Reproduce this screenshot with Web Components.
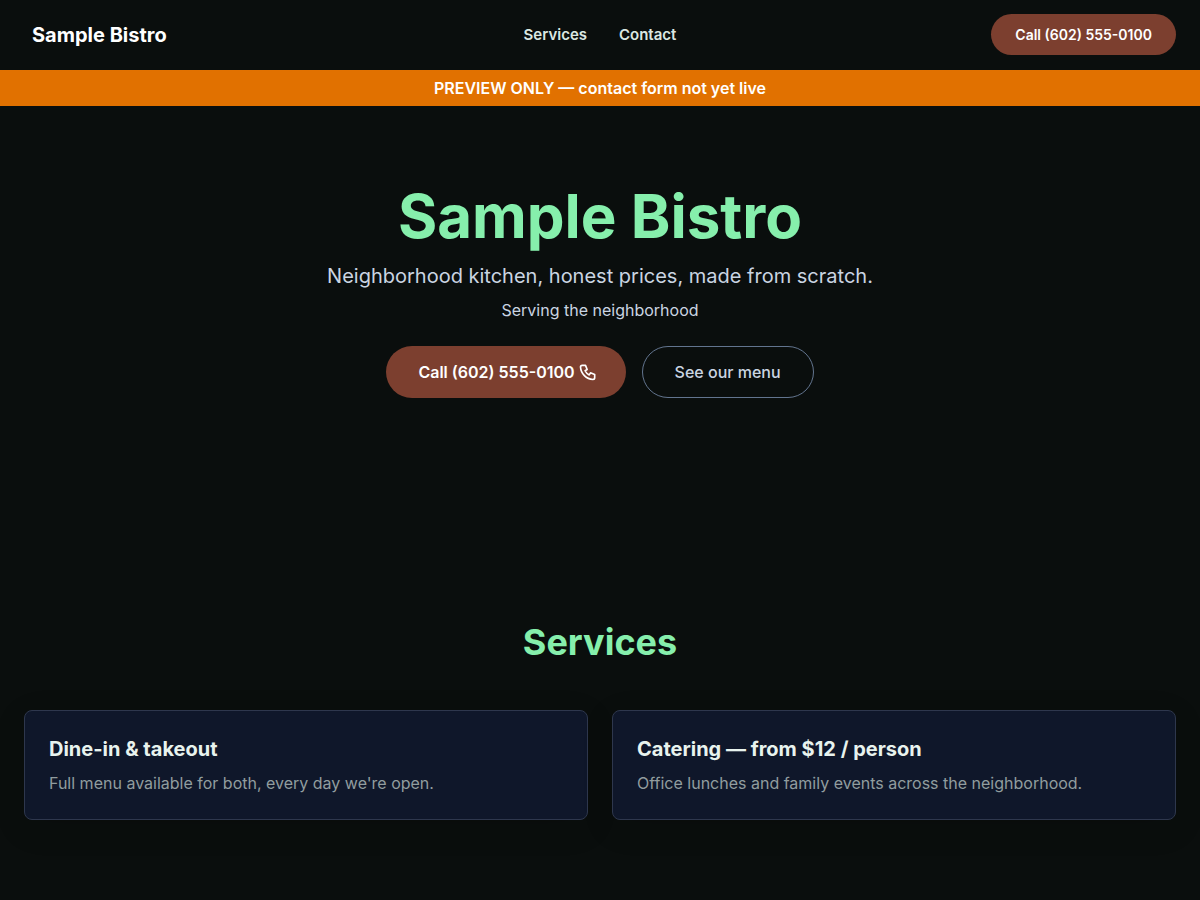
<!DOCTYPE html>
<html lang="en">
<head>
<meta charset="utf-8">
<meta name="viewport" content="width=device-width, initial-scale=1">
<title>Sample Bistro</title>
<style>
  body {
    --brand: #7c3f2f;
    --accent: #86efac;
    --surface: #0f172a;
    margin: 0;
    background: #0a0e0d;
    color: #e8f3ee;
    font: 400 16px/24px Inter, "Liberation Sans", sans-serif;
  }
</style>
</head>
<body>
<bistro-page></bistro-page>

<template id="page">
  <style>
    :host { display: block; }
  </style>
  <site-header></site-header>
  <preview-banner>PREVIEW ONLY — contact form not yet live</preview-banner>
  <main>
    <hero-section></hero-section>
    <services-section>
      <service-card>
        <span slot="title">Dine-in &amp; takeout</span>
        Full menu available for both, every day we're open.
      </service-card>
      <service-card>
        <span slot="title">Catering — from $12 / person</span>
        Office lunches and family events across the neighborhood.
      </service-card>
    </services-section>
  </main>
</template>

<template id="header">
  <style>
    :host { display: block; }
    header {
      display: grid;
      grid-template-columns: 1fr auto 1fr;
      align-items: center;
      padding: 14px 24px 15px;
    }
    .brand { padding: 0 8px; color: #fff; font-size: 20px; font-weight: 700; text-decoration: none; justify-self: start; }
    nav { display: flex; gap: 32px; }
    nav a { color: #dbe7e2; font-size: 15px; font-weight: 600; text-decoration: none; }
    pill-link { justify-self: end; }
  </style>
  <header>
    <a class="brand" href="#top">Sample Bistro</a>
    <nav aria-label="Main">
      <a href="#services">Services</a>
      <a href="#contact">Contact</a>
    </nav>
    <pill-link size="small" href="tel:6025550100">Call (602) 555-0100</pill-link>
  </header>
</template>

<template id="banner">
  <style>
    :host {
      display: block;
      padding: 6px 16px;
      background: #e17100;
      color: #fff;
      font-weight: 600;
      text-align: center;
    }
  </style>
  <slot></slot>
</template>

<template id="pill">
  <style>
    :host { display: block; }
    a {
      display: flex;
      align-items: center;
      gap: 3px;
      padding: 14px 32px;
      border-radius: 32px;
      background: var(--brand);
      color: #fff;
      font-weight: 600;
      text-decoration: none;
      white-space: nowrap;
    }
    :host([size="small"]) a { padding: 10px 24px; font-size: 14px; line-height: 21px; }
    :host([with-icon]) a { padding-right: 28px; }
    :host([variant="outline"]) a {
      padding: 13px 32px;
      border: 1px solid #62748e;
      background: none;
      color: #cad5e2;
      font-weight: 500;
    }
  </style>
  <a><slot></slot><slot name="icon"></slot></a>
</template>

<template id="hero">
  <style>
    :host { display: block; }
    section {
      display: flex;
      flex-direction: column;
      align-items: center;
      padding: 80px 24px 128px;
      text-align: center;
    }
    h1 { margin: 0; color: var(--accent); font-size: 60px; line-height: 60px; font-weight: 700; }
    p { margin: 0; color: #cad5e2; }
    .tagline { margin-top: 16px; font-size: 20px; line-height: 28px; }
    .area { margin-top: 8px; }
    .actions { display: flex; flex-wrap: wrap; justify-content: center; gap: 16px; margin-top: 24px; }
    svg { display: block; }
  </style>
  <section id="top">
    <h1>Sample Bistro</h1>
    <p class="tagline">Neighborhood kitchen, honest prices, made from scratch.</p>
    <p class="area">Serving the neighborhood</p>
    <div class="actions">
      <pill-link with-icon href="tel:6025550100">Call (602) 555-0100
        <svg slot="icon" width="20" height="20" viewBox="0 0 24 24" fill="none" stroke="currentColor" stroke-width="2" stroke-linecap="round" stroke-linejoin="round" aria-hidden="true"><path d="M5 4h4l2 5l-2.5 1.5a11 11 0 0 0 5 5l1.5 -2.5l5 2v4a2 2 0 0 1 -2 2a16 16 0 0 1 -15 -15a2 2 0 0 1 2 -2"/></svg>
      </pill-link>
      <pill-link variant="outline" href="#services">See our menu</pill-link>
    </div>
  </section>
</template>

<template id="services-list">
  <style>
    :host { display: block; }
    section { padding: 96px 24px 76px; }
    h2 { margin: 0; color: var(--accent); font-size: 36px; line-height: 40px; font-weight: 700; text-align: center; }
    .grid {
      display: grid;
      grid-template-columns: repeat(auto-fit, minmax(320px, 1fr));
      gap: 24px;
      margin-top: 48px;
    }
  </style>
  <section id="services">
    <h2>Services</h2>
    <div class="grid"><slot></slot></div>
  </section>
</template>

<template id="card">
  <style>
    :host { display: block; }
    article {
      padding: 24px;
      border: 1px solid #2e374d;
      border-radius: 8px;
      background: var(--surface);
      box-shadow: 0 8px 32px rgba(0, 0, 0, 0.12);
    }
    h3 { margin: 0; font-size: 20px; line-height: 28px; font-weight: 700; }
    p { margin: 8px 0 0; color: #919d9f; }
  </style>
  <article>
    <h3><slot name="title"></slot></h3>
    <p><slot></slot></p>
  </article>
</template>

<script>
  class TemplateElement extends HTMLElement {
    constructor() {
      super();
      this.attachShadow({ mode: "open" });
      const template = document.getElementById(this.constructor.template);
      this.shadowRoot.append(template.content.cloneNode(true));
    }
  }

  class SiteHeader extends TemplateElement { static template = "header"; }
  class PreviewBanner extends TemplateElement { static template = "banner"; }
  class PillLink extends TemplateElement {
    static template = "pill";
    static observedAttributes = ["href"];
    attributeChangedCallback(name, previous, value) {
      this.shadowRoot.querySelector("a").setAttribute(name, value);
    }
  }
  class HeroSection extends TemplateElement { static template = "hero"; }
  class ServiceCard extends TemplateElement { static template = "card"; }
  class ServicesSection extends TemplateElement { static template = "services-list"; }
  class BistroPage extends TemplateElement { static template = "page"; }

  customElements.define("pill-link", PillLink);
  customElements.define("site-header", SiteHeader);
  customElements.define("preview-banner", PreviewBanner);
  customElements.define("hero-section", HeroSection);
  customElements.define("service-card", ServiceCard);
  customElements.define("services-section", ServicesSection);
  customElements.define("bistro-page", BistroPage);
</script>
</body>
</html>
